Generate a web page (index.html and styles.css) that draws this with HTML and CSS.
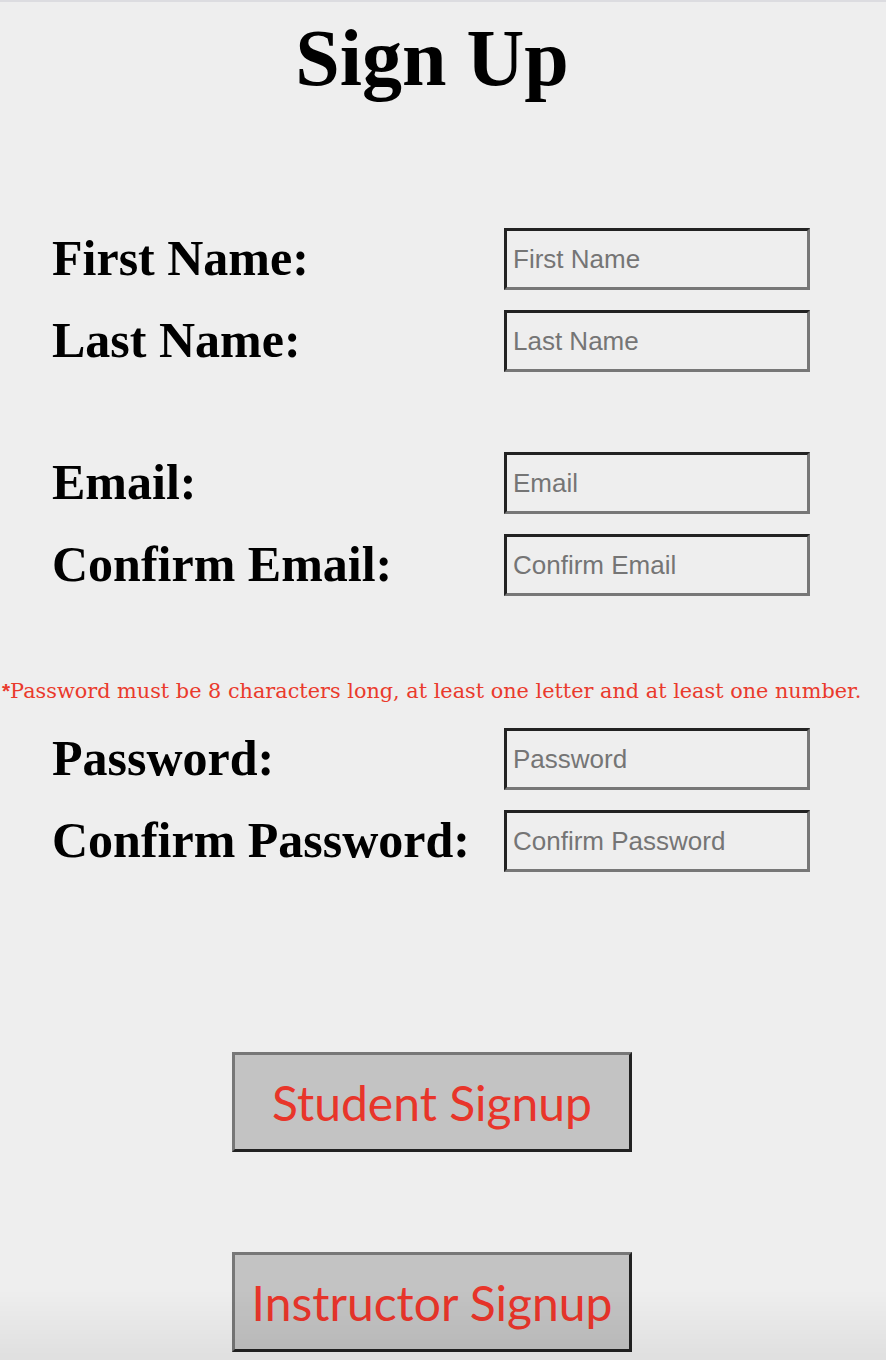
FILE: index.html
```html
<!DOCTYPE html>
<html lang="en">
<head>
<meta charset="utf-8">
<title>Sign Up</title>
<link rel="stylesheet" href="styles.css">
</head>
<body>
<main class="page">
  <h1 class="title">Sign Up</h1>
  <form class="form">
    <div class="group group-name">
      <label class="row"><span class="label">First Name:</span><input class="field" type="text" placeholder="First Name"></label>
      <label class="row"><span class="label">Last Name:</span><input class="field" type="text" placeholder="Last Name"></label>
    </div>
    <div class="group group-email">
      <label class="row"><span class="label">Email:</span><input class="field" type="text" placeholder="Email"></label>
      <label class="row"><span class="label">Confirm Email:</span><input class="field" type="text" placeholder="Confirm Email"></label>
    </div>
    <p class="note"><span class="star">*</span>Password must be 8 characters long, at least one letter and at least one number.</p>
    <div class="group group-pass">
      <label class="row"><span class="label">Password:</span><input class="field" type="password" placeholder="Password"></label>
      <label class="row"><span class="label">Confirm Password:</span><input class="field" type="password" placeholder="Confirm Password"></label>
    </div>
    <div class="actions">
      <button class="btn" type="button">Student Signup</button>
      <button class="btn" type="button">Instructor Signup</button>
    </div>
  </form>
</main>
<div class="fade"></div>
</body>
</html>
```
FILE: styles.css
```css
html, body {
  margin: 0;
  padding: 0;
}
body {
  background: #eeeeee;
  border-top: 2px solid #dcdce0;
  min-height: 1358px;
}
.page {
  width: 864px;
  display: flex;
  flex-direction: column;
  align-items: center;
}
.title {
  margin: 16px 0 0;
  font-family: "Liberation Serif", serif;
  font-weight: bold;
  font-size: 80px;
  line-height: 80px;
  color: #000;
}
.form {
  width: 100%;
  display: flex;
  flex-direction: column;
  align-items: stretch;
}
.group {
  display: flex;
  flex-direction: column;
  gap: 20px;
  padding-left: 52px;
}
.group-name { margin-top: 130px; }
.group-email { margin-top: 80px; }
.group-pass { margin-top: 25px; }
.row {
  display: grid;
  grid-template-columns: 452px 306px;
  align-items: center;
}
.label {
  font-family: "Liberation Serif", serif;
  font-weight: bold;
  font-size: 50px;
  line-height: 56px;
  color: #000;
  white-space: nowrap;
  position: relative;
  top: -1px;
}
.field {
  box-sizing: border-box;
  width: 306px;
  height: 62px;
  margin: 0;
  padding: 0 6px;
  border: 3px solid;
  border-color: #222222 #777777 #777777 #222222;
  background: #eeeeee;
  font-family: "Liberation Sans", Arial, sans-serif;
  font-size: 26px;
  color: #222;
  outline: none;
}
.field::placeholder {
  color: #757575;
  opacity: 1;
}
.note {
  margin: 83px 0 0;
  padding-left: 2px;
  font-family: "DejaVu Serif", serif;
  font-size: 20.8px;
  line-height: 24px;
  color: #ea3a2c;
  white-space: nowrap;
}
.star {
  font-family: "Liberation Sans", sans-serif;
  font-weight: bold;
}
.actions {
  display: flex;
  flex-direction: column;
  align-items: center;
  gap: 100px;
  margin-top: 180px;
}
.btn {
  box-sizing: border-box;
  width: 400px;
  height: 100px;
  margin: 0;
  padding: 0;
  border: 3px solid;
  border-color: #777777 #222222 #222222 #777777;
  background: #c3c3c3;
  font-family: Lato, "Open Sans", sans-serif;
  font-size: 48px;
  color: #e8352a;
  cursor: pointer;
}
.fade {
  position: fixed;
  left: 0;
  right: 0;
  bottom: 0;
  height: 70px;
  pointer-events: none;
  background: linear-gradient(to bottom, rgba(0,0,0,0), rgba(0,0,0,0.06));
}
```
